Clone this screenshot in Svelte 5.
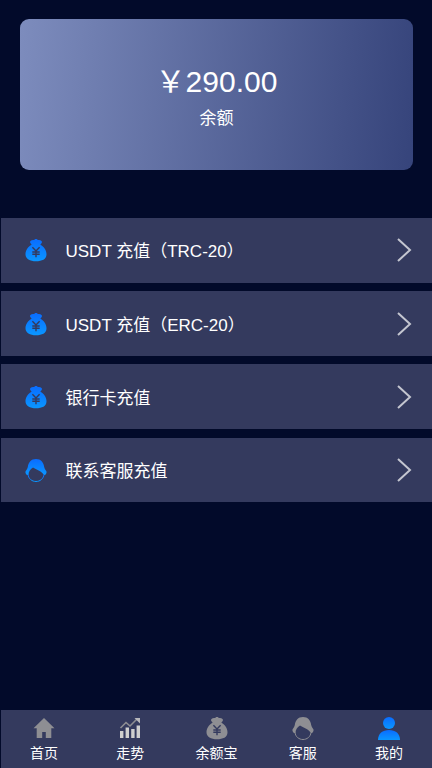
<script>
  const rows = [
    { label: "USDT 充值（TRC-20）", icon: "bag" },
    { label: "USDT 充值（ERC-20）", icon: "bag" },
    { label: "银行卡充值", icon: "bag" },
    { label: "联系客服充值", icon: "service" },
  ];
  const tabs = [
    { label: "首页", icon: "home" },
    { label: "走势", icon: "chart" },
    { label: "余额宝", icon: "bag" },
    { label: "客服", icon: "service" },
    { label: "我的", icon: "user", active: true },
  ];
</script>

{#snippet icon(name, fill)}
  <svg class="icon" viewBox="0 0 24 24" aria-hidden="true">
    {#if name === "bag"}
      <path fill={fill} d="M12 1c1 0 1.500.5 1.800 1.100 1.400-.3 2.900 0 3.700.8.700.7.500 1.800-.2 2.700-.3.400-.6.800-.9 1.100 3.600 1.900 6.100 5.700 6.100 9.500 0 5-4.500 7-10.500 7S1.500 21 1.500 16.200c0-3.800 2.500-7.600 6.100-9.500-.3-.3-.6-.7-.9-1.100-.7-.9-.9-2-.2-2.700.8-.8 2.300-1.100 3.700-.8.300-.6.800-1.100 1.800-1.100z"/>
      <path class="mark" d="M8.400 9.200 12 13l3.600-3.800M8.300 14h7.400M8.300 16.300h7.400M12 13v6.300"/>
    {:else if name === "service"}
      <path fill={fill} d="M12 1C7 1 4.500 4.500 3.800 9c-.3 2-1.600 3-2.300 4.500-.3.900.2 2.500 1.500 3.500h1.500C4.500 13.500 6 11.500 9 9.500c3.500 2.500 8 3 11 7.500h1c1.300-1 1.800-2.600 1.500-3.500-.7-1.500-2-2.500-2.300-4.500C19.500 4.500 17 1 12 1z"/>
      <path class="face" stroke={fill} d="M4 16.500c.5 4.300 4 7 8 7s7.500-2.700 8-7"/>
    {:else if name === "home"}
      <path fill={fill} d="M12 2 1.500 12.200h3.200V22h5.500v-6h3.600v6h5.500v-9.800h3.200z"/>
    {:else if name === "chart"}
      <path class="line" d="M2.500 12 8 6.500l4 3.500 7-7"/>
      <path class="arrow" d="M16.500 2h5.500v5.500z"/>
      <path class="bar" d="M2 15h3.400v7H2zM7.600 11.500H11V22H7.600zM13.200 13h3.400v9h-3.400zM18.600 9.500H22V22h-3.400z"/>
    {:else}
      <circle fill={fill} cx="12" cy="7" r="6"/>
      <path fill={fill} d="M1 24c0-6.500 4.500-10 11-10s11 3.500 11 10z"/>
    {/if}
  </svg>
{/snippet}

<div class="page">
  <section class="balance">
    <div class="amount">￥290.00</div>
    <div class="caption">余额</div>
  </section>

  <ul class="rows">
    {#each rows as row}
      <li class="row">
        <span class="row-icon">{@render icon(row.icon, "url(#blue)")}</span>
        <span class="row-label">{row.label}</span>
        <svg class="chevron" viewBox="0 0 16 24" aria-hidden="true">
          <path d="M2 1l12 11L2 23"/>
        </svg>
      </li>
    {/each}
  </ul>

  <nav class="tabbar">
    {#each tabs as tab}
      <div class="tab">
        <span class="tab-icon">{@render icon(tab.icon, tab.active ? "url(#blue)" : "#8e8e93")}</span>
        <span class="tab-label">{tab.label}</span>
      </div>
    {/each}
  </nav>

  <svg class="defs" aria-hidden="true">
    <defs>
      <linearGradient id="blue" x1="0" y1="0" x2="0" y2="1">
        <stop offset="0" stop-color="#0a6cff"/>
        <stop offset="1" stop-color="#0a96ff"/>
      </linearGradient>
    </defs>
  </svg>
</div>

<style>
  :global(body) {
    margin: 0;
    background: #020a2a;
  }

  .page {
    box-sizing: border-box;
    height: 768px;
    display: flex;
    flex-direction: column;
    margin-left: 1px;
    background: #020a2a;
    color: #fff;
    font-family: "Liberation Sans", "Noto Sans CJK SC", sans-serif;
    overflow: hidden;
  }

  .balance {
    box-sizing: border-box;
    height: 151px;
    margin: 19px 19px 0;
    display: flex;
    flex-direction: column;
    align-items: center;
    justify-content: center;
    gap: 9px;
    padding-top: 6px;
    border-radius: 9px;
    background: linear-gradient(95deg, #7d8cbd, #36447b);
  }

  .amount {
    font-size: 30px;
    line-height: 34px;
  }

  .caption {
    font-size: 17px;
    line-height: 22px;
  }

  .rows {
    list-style: none;
    margin: 48px 0 0;
    padding: 0;
    display: flex;
    flex-direction: column;
    gap: 8.400px;
  }

  .row {
    height: 64.800px;
    display: flex;
    align-items: center;
    padding: 0 20px 0 22.500px;
    background: #343a5e;
  }

  .row-icon {
    width: 24px;
    height: 24px;
    margin-right: 18px;
  }

  .row-label {
    flex: 1;
    font-size: 17px;
    margin-top: -1px;
  }

  .chevron {
    width: 16px;
    height: 24px;
    fill: none;
    stroke: #c4c6d0;
    stroke-width: 2;
  }

  .icon {
    display: block;
    width: 100%;
    height: 100%;
  }

  .mark {
    fill: none;
    stroke: #343a5e;
    stroke-width: 1.400;
  }

  .face {
    fill: none;
    stroke-width: 1;
  }

  .line {
    fill: none;
    stroke: #8e8e93;
    stroke-width: 1.600;
  }

  .arrow {
    fill: #b8b8bc;
  }

  .bar {
    fill: #cfcfcf;
  }

  .tabbar {
    margin-top: auto;
    height: 58px;
    display: flex;
    background: #343a5e;
  }

  .tab {
    flex: 1;
    display: flex;
    flex-direction: column;
    align-items: center;
    padding-top: 6px;
  }

  .tab-icon {
    width: 24px;
    height: 24px;
  }

  .tab-label {
    margin-top: 5px;
    font-size: 14px;
    line-height: 16px;
  }

  .defs {
    position: absolute;
    width: 0;
    height: 0;
  }
</style>
